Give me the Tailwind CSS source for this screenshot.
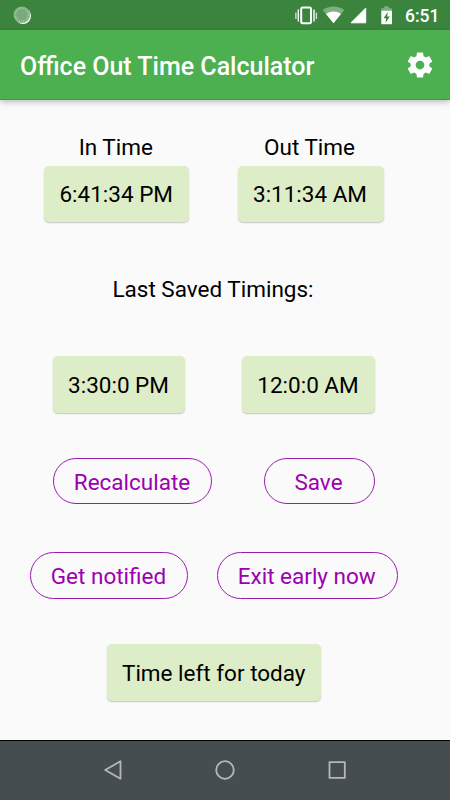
<!DOCTYPE html>
<html lang="en">
<head>
  <meta charset="UTF-8">
  <meta name="viewport" content="width=device-width, initial-scale=1.0">
  <title>Office Out Time Calculator</title>
  <script src="https://cdn.jsdelivr.net/npm/@tailwindcss/browser@4"></script>
</head>
<body class="w-[450px] h-[800px] overflow-hidden flex flex-col bg-[#fafafa] font-[Roboto,sans-serif] text-[22.5px] leading-[26px] text-black">

  <!-- status bar -->
  <div class="h-[30px] shrink-0 bg-[#3b843e] flex items-center pl-[13px] pr-[10px] text-white">
    <svg class="w-[19px] h-[19px]" viewBox="0 0 19 19">
      <circle cx="10" cy="10" r="8" fill="#fff"/>
      <circle cx="8.8" cy="8.8" r="8.3" fill="#79aa7b"/>
      <circle cx="8.8" cy="8.8" r="6.8" fill="none" stroke="#a9c9aa" stroke-width="2.2" stroke-dasharray="1 1.1"/>
    </svg>
    <div class="ml-auto flex items-center">
      <svg class="w-[23px] h-[20px]" viewBox="0 0 23 20">
        <rect x="6.200" y="2.400" width="9.800" height="15.800" rx="1.500" fill="none" stroke="#fff" stroke-width="2"/>
        <path d="M3.300 4.500v12M19 4.500v12" stroke="#fff" stroke-width="1.400"/>
        <path d="M.9 7.500v6.500M21.400 7.500v6.500" stroke="#fff" stroke-width="1.400" opacity=".75"/>
      </svg>
      <svg class="ml-[4px] w-[23px] h-[20px]" viewBox="0 0 23 20">
        <path d="M11.500 18.300.700 5C6.500.300 16.500.300 22.300 5z" fill="#fff" opacity=".35"/>
        <path d="M11.500 18.300 4 9c4.500-3.300 10.500-3.300 15 0z" fill="#fff"/>
      </svg>
      <svg class="ml-[4px] w-[18px] h-[20px]" viewBox="0 0 18 20">
        <path d="M16.700 3.100v14.700H2z" fill="#fff" stroke="#fff" stroke-linejoin="round"/>
      </svg>
      <svg class="ml-[13px] w-[13px] h-[20px]" viewBox="0 0 13 20">
        <path d="M4.300 1.200h4.500v2h3v2.500h-10.500V3.200h3z" fill="#fff" opacity=".35"/>
        <path d="M1.300 5.700h10.700v13.500H1.300z" fill="#fff"/>
        <path d="M7.700 7 3.600 13.200h2.500L5.600 17.800 9.800 11.500H7.200z" fill="#3b843e"/>
      </svg>
      <span class="ml-[12px] w-[35px] text-[17.5px] leading-5 font-medium whitespace-nowrap pt-px">6:51</span>
    </div>
  </div>

  <!-- app bar -->
  <header class="relative h-[70px] shrink-0 bg-[#4caf50] border-b border-[#35a039] flex items-center justify-between pl-5 pr-[15px] text-white shadow-[0_2px_6px_rgba(0,0,0,0.25)]">
    <h1 class="text-[25px] leading-[30px] font-medium whitespace-nowrap pt-[5px]">Office Out Time Calculator</h1>
    <svg class="w-[30px] h-[30px]" viewBox="0 0 24 24" fill="#fff">
      <path d="M19.430 12.980c.040-.320.070-.640.070-.980s-.030-.660-.070-.980l2.110-1.650c.190-.150.240-.420.120-.640l-2-3.460c-.120-.220-.390-.300-.610-.220l-2.490 1c-.520-.400-1.080-.730-1.690-.980l-.380-2.650C14.460 2.180 14.250 2 14 2h-4c-.250 0-.460.180-.490.420l-.380 2.650c-.610.250-1.170.590-1.690.980l-2.490-1c-.230-.090-.490 0-.610.220l-2 3.460c-.130.220-.070.490.120.640l2.110 1.650c-.040.320-.070.650-.070.980s.030.660.070.980l-2.110 1.650c-.190.150-.240.420-.120.640l2 3.460c.120.220.390.300.610.220l2.490-1c.520.400 1.080.730 1.690.980l.380 2.650c.030.240.240.420.490.420h4c.250 0 .460-.180.490-.420l.380-2.650c.610-.250 1.170-.590 1.690-.980l2.490 1c.230.090.490 0 .610-.220l2-3.460c.120-.220.070-.490-.120-.640l-2.110-1.650zM12 15.500c-1.930 0-3.500-1.570-3.500-3.500s1.570-3.500 3.500-3.500 3.500 1.570 3.500 3.500-1.570 3.500-3.500 3.500z"/>
    </svg>
  </header>

  <main class="flex-1 flex flex-col pt-[34px] whitespace-nowrap">
    <div class="flex gap-[49px] pl-[44px]">
      <div class="flex flex-col items-center w-[144.5px]">
        <span class="pr-px">In Time</span>
        <div class="mt-[5.5px] w-full h-[56.5px] flex items-center justify-center rounded-[5px] bg-[#dcedc8] shadow-[0_1px_1.5px_rgba(0,0,0,0.22)]">6:41:34 PM</div>
      </div>
      <div class="flex flex-col items-center w-[146px]">
        <span class="pr-[2px]">Out Time</span>
        <div class="mt-[5.5px] w-full h-[56.5px] flex items-center justify-center rounded-[5px] bg-[#dcedc8] pr-px shadow-[0_1px_1.5px_rgba(0,0,0,0.22)]">3:11:34 AM</div>
      </div>
    </div>

    <p class="mt-[54px] w-[426px] text-center">Last Saved Timings:</p>

    <div class="mt-[54px] pl-[52.5px] flex gap-[57px]">
      <div class="w-[132px] h-[57px] flex items-center justify-center rounded-[5px] bg-[#dcedc8] shadow-[0_1px_1.5px_rgba(0,0,0,0.22)]">3:30:0 PM</div>
      <div class="w-[133px] h-[57px] flex items-center justify-center rounded-[5px] bg-[#dcedc8] shadow-[0_1px_1.5px_rgba(0,0,0,0.22)]">12:0:0 AM</div>
    </div>

    <div class="mt-[45px] pl-[52.5px] flex gap-[52px] text-[#9c00b0]">
      <button class="w-[159px] h-[46px] pt-px rounded-full border border-[#9a1cae]">Recalculate</button>
      <button class="w-[111px] h-[46px] pt-px pr-px rounded-full border border-[#9a1cae]">Save</button>
    </div>

    <div class="mt-[48px] pl-[30px] flex gap-[29px] text-[#9c00b0]">
      <button class="w-[158px] h-[47px] pr-px rounded-full border border-[#9a1cae]">Get notified</button>
      <button class="w-[180.5px] h-[47px] pr-px rounded-full border border-[#9a1cae]">Exit early now</button>
    </div>

    <div class="mt-[45px] ml-[106.5px] w-[214.5px] h-[57px] flex items-center justify-center rounded-[5px] bg-[#dcedc8] shadow-[0_1px_1.5px_rgba(0,0,0,0.22)]">Time left for today</div>
  </main>

  <!-- navigation bar -->
  <nav class="h-[60px] shrink-0 bg-[#454d51] border-t border-black flex items-center justify-center gap-[92px] pb-px">
    <svg class="w-5 h-5" viewBox="0 0 20 20" fill="none" stroke="#b5b8ba" stroke-width="1.8" stroke-linejoin="round">
      <path d="M17.500 1.300v17.400L2.200 10z"/>
    </svg>
    <svg class="w-5 h-5" viewBox="0 0 20 20" fill="none" stroke="#b5b8ba" stroke-width="1.8">
      <circle cx="10" cy="10" r="8.800"/>
    </svg>
    <svg class="w-5 h-5" viewBox="0 0 20 20" fill="none" stroke="#b5b8ba" stroke-width="1.8" stroke-linejoin="round">
      <path d="M2.500 2.100h15.300v15.800H2.500z"/>
    </svg>
  </nav>
</body>
</html>
